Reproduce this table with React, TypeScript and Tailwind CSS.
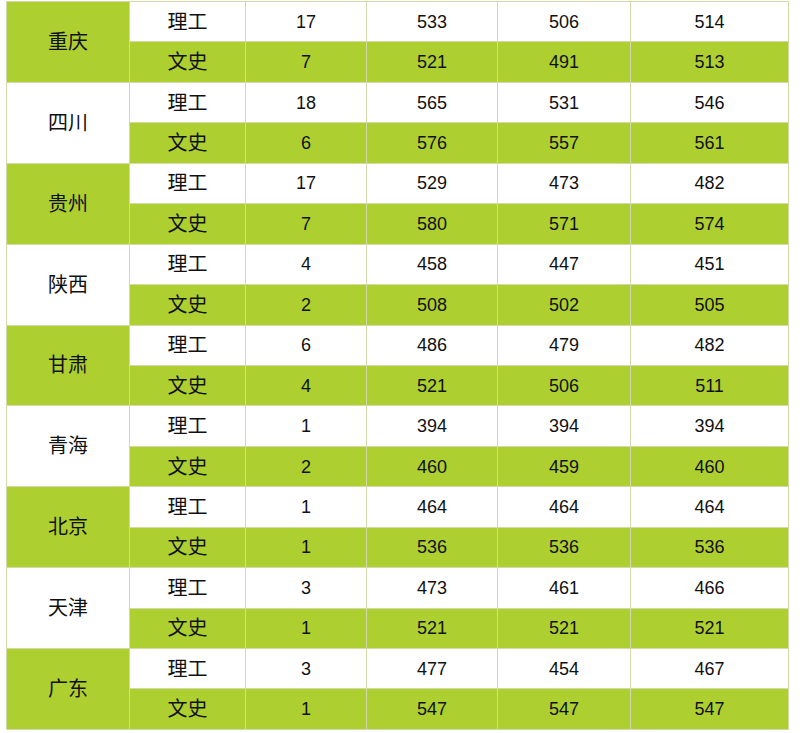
const rows: { province: string; data: [string, string, string, string, string][] }[] = [
  { province: "重庆", data: [["理工", "17", "533", "506", "514"], ["文史", "7", "521", "491", "513"]] },
  { province: "四川", data: [["理工", "18", "565", "531", "546"], ["文史", "6", "576", "557", "561"]] },
  { province: "贵州", data: [["理工", "17", "529", "473", "482"], ["文史", "7", "580", "571", "574"]] },
  { province: "陕西", data: [["理工", "4", "458", "447", "451"], ["文史", "2", "508", "502", "505"]] },
  { province: "甘肃", data: [["理工", "6", "486", "479", "482"], ["文史", "4", "521", "506", "511"]] },
  { province: "青海", data: [["理工", "1", "394", "394", "394"], ["文史", "2", "460", "459", "460"]] },
  { province: "北京", data: [["理工", "1", "464", "464", "464"], ["文史", "1", "536", "536", "536"]] },
  { province: "天津", data: [["理工", "3", "473", "461", "466"], ["文史", "1", "521", "521", "521"]] },
  { province: "广东", data: [["理工", "3", "477", "454", "467"], ["文史", "1", "547", "547", "547"]] },
]

const green = "bg-[#aecf30]"

export default function App() {
  return (
    <div className="w-[800px] h-[733px] bg-white pt-px pl-[6px] text-[#111]" style={{ fontFamily: '"Liberation Sans", "Noto Sans CJK SC", sans-serif' }}>
      <table className="border-collapse table-fixed w-[782px]">
        <colgroup>
          <col className="w-[123px]" />
          <col className="w-[116px]" />
          <col className="w-[121px]" />
          <col className="w-[131px]" />
          <col className="w-[133px]" />
          <col className="w-[158px]" />
        </colgroup>
        <tbody>
          {rows.map((group, gi) =>
            group.data.map((r, ri) => {
              const rowBg = ri === 1 ? green : "bg-white"
              return (
                <tr key={`${gi}-${ri}`} className="h-[40.45px]">
                  {ri === 0 && (
                    <td
                      rowSpan={2}
                      className={`${gi % 2 === 0 ? green : "bg-white"} border border-[#d3d9ab] text-center text-[20px] leading-none p-0`}
                    >
                      {group.province}
                    </td>
                  )}
                  <td className={`${rowBg} border border-[#d3d9ab] text-center text-[20px] leading-none p-0`}>{r[0]}</td>
                  {r.slice(1).map((v, i) => (
                    <td key={i} className={`${rowBg} border border-[#d3d9ab] text-center text-[18px] leading-none p-0`}>
                      {v}
                    </td>
                  ))}
                </tr>
              )
            })
          )}
        </tbody>
      </table>
    </div>
  )
}
